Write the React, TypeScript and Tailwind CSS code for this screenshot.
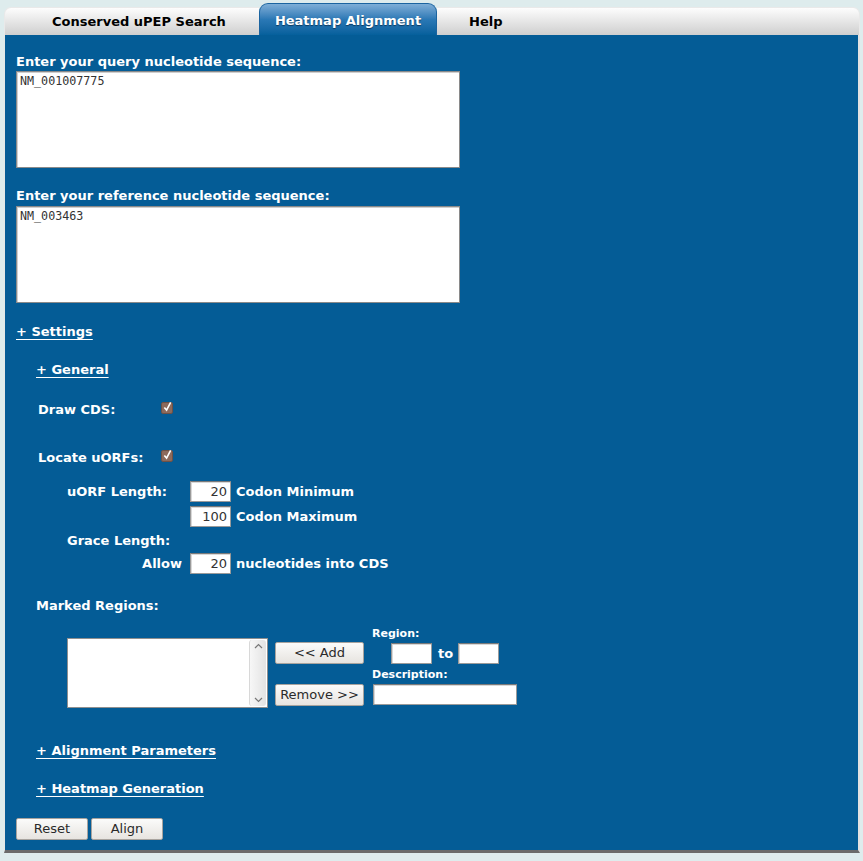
const font = "font-['DejaVu_Sans',Verdana,sans-serif]";

function Checkbox() {
  return (
    <span className="inline-flex h-[12px] w-[12px] items-center justify-center rounded-[2px] border border-[#6e5146] bg-[#8c6a5c]">
      <svg width="10" height="11" viewBox="0 0 10 11" className="-mt-[3px] ml-[1px]">
        <path d="M1.5 6.5 L4 9.5 L8.5 1" fill="none" stroke="#fff" strokeWidth="1.8" />
      </svg>
    </span>
  );
}

function NumInput({ value, w = "w-[41px]" }: { value?: string; w?: string }) {
  return (
    <div
      className={`${w} h-[21px] shrink-0 border border-[#9a9a9a] border-t-[#7a7a7a] bg-white px-[3px] text-right text-[13px] leading-[19px] text-[#333] shadow-[inset_1px_1px_0_#d8d8d8]`}
    >
      {value}
    </div>
  );
}

function Button({ children, w }: { children: React.ReactNode; w: string }) {
  return (
    <div
      className={`${w} h-[22px] shrink-0 rounded-[2px] border border-[#a8a39e] bg-gradient-to-b from-[#fbfbfa] to-[#e7e4e0] text-center text-[13px] leading-[20px] text-[#2a2a2a]`}
    >
      {children}
    </div>
  );
}

function Link({ children }: { children: React.ReactNode }) {
  return (
    <span className="font-bold text-white underline decoration-1 underline-offset-[3px]">{children}</span>
  );
}

export default function App() {
  return (
    <div className={`min-h-screen bg-[#deeced] pt-[3px] pl-[4px] ${font}`}>
      <div className="w-[856px]">
        {/* tabs */}
        <div className="flex h-[32px] items-end">
          <div className="h-[28px] w-[255px] rounded-tl-[7px] border-l border-t border-[#e9e9e9] bg-gradient-to-b from-[#fdfdfd] to-[#cfcfcf] pl-[47px] text-[13px] font-bold leading-[27px] text-black">
            Conserved uPEP Search
          </div>
          <div className="relative h-[32px] w-[178px] rounded-t-[9px] border border-b-0 border-[#1b64a0] bg-gradient-to-b from-[#7eaed7] via-[#2a78b5] to-[#05609c] text-center text-[13px] font-bold leading-[33px] text-white [text-shadow:0_1px_1px_#0b3a60]">
            Heatmap Alignment
          </div>
          <div className="h-[28px] flex-1 rounded-tr-[7px] border-r border-t border-[#e9e9e9] bg-gradient-to-b from-[#fdfdfd] to-[#cfcfcf] pl-[32px] text-[13px] font-bold leading-[27px] text-black">
            Help
          </div>
        </div>

        {/* panel */}
        <div className="border-b-[3px] border-l border-r-[2px] border-b-[#6b6b6b] border-l-[#e4e8e8] border-r-[#e2e2e2] bg-[#045c96] pl-[11px] pr-[10px] pt-[19px] pb-[10px] text-[13px] leading-[16px] text-white">
          <div className="font-bold">Enter your query nucleotide sequence:</div>
          <div className="mt-[1px] h-[97px] w-[444px] border border-[#8a8a8a] bg-white px-[3px] pt-[2px] font-['DejaVu_Sans_Mono',monospace] text-[11.7px] leading-[14px] text-[#333] shadow-[inset_1px_1px_0_#cfcfcf]">
            NM_001007775
          </div>

          <div className="mt-[20px] font-bold">Enter your reference nucleotide sequence:</div>
          <div className="mt-[2px] h-[97px] w-[444px] border border-[#8a8a8a] bg-white px-[3px] pt-[2px] font-['DejaVu_Sans_Mono',monospace] text-[11.7px] leading-[14px] text-[#333] shadow-[inset_1px_1px_0_#cfcfcf]">
            NM_003463
          </div>

          <div className="mt-[21px]">
            <Link>+ Settings</Link>
          </div>

          <div className="ml-[20px] mt-[22px]">
            <Link>+ General</Link>
          </div>

          <div className="ml-[22px] mt-[24px] flex items-start">
            <span className="w-[123px] font-bold">Draw CDS:</span>
            <Checkbox />
          </div>

          <div className="ml-[22px] mt-[32px] flex items-start">
            <span className="w-[123px] font-bold">Locate uORFs:</span>
            <Checkbox />
          </div>

          <div className="ml-[51px] mt-[15px] flex flex-col gap-[4px]">
            <div className="flex items-center">
              <span className="w-[123px] font-bold">uORF Length:</span>
              <NumInput value="20" />
              <span className="ml-[5px] font-bold">Codon Minimum</span>
            </div>
            <div className="flex items-center">
              <span className="w-[123px]" />
              <NumInput value="100" />
              <span className="ml-[5px] font-bold">Codon Maximum</span>
            </div>
            <div className="mt-[2px] font-bold">Grace Length:</div>
            <div className="flex items-center">
              <span className="w-[115px] text-right font-bold">Allow</span>
              <span className="w-[8px]" />
              <NumInput value="20" />
              <span className="ml-[5px] font-bold">nucleotides into CDS</span>
            </div>
          </div>

          <div className="ml-[20px] mt-[24px] font-bold">Marked Regions:</div>

          <div className="ml-[51px] mt-[13px] flex items-start">
            <div className="mt-[11px] flex h-[70px] w-[201px] border border-[#8f8f8f] bg-white">
              <div className="flex-1" />
              <div className="my-[1px] mr-[1px] flex w-[17px] flex-col items-center justify-between rounded-[3px] border-l border-[#d8d8d8] bg-gradient-to-r from-[#f7f7f7] to-[#e3e3e3] py-[3px]">
                <svg width="9" height="6" viewBox="0 0 9 6">
                  <path d="M1 5 L4.5 1.5 L8 5" fill="none" stroke="#777" strokeWidth="1.2" />
                </svg>
                <svg width="9" height="6" viewBox="0 0 9 6">
                  <path d="M1 1 L4.5 4.5 L8 1" fill="none" stroke="#777" strokeWidth="1.2" />
                </svg>
              </div>
            </div>
            <div className="ml-[7px] mt-[15px] flex flex-col gap-[20px]">
              <Button w="w-[89px]">&lt;&lt; Add</Button>
              <Button w="w-[89px]">Remove &gt;&gt;</Button>
            </div>
            <div className="ml-[8px] flex flex-col">
              <div className="text-[11px] font-bold leading-[13px]">Region:</div>
              <div className="ml-[19px] mt-[3px] flex items-center">
                <NumInput />
                <span className="ml-[6px] w-[20px] font-bold">to</span>
                <NumInput />
              </div>
              <div className="mt-[4px] text-[11px] font-bold leading-[13px]">Description:</div>
              <div className="ml-[1px] mt-[3px]">
                <NumInput w="w-[144px]" />
              </div>
            </div>
          </div>

          <div className="ml-[20px] mt-[35px]">
            <Link>+ Alignment Parameters</Link>
          </div>
          <div className="ml-[20px] mt-[22px]">
            <Link>+ Heatmap Generation</Link>
          </div>

          <div className="mt-[21px] flex gap-[3px]">
            <Button w="w-[72px]">Reset</Button>
            <Button w="w-[72px]">Align</Button>
          </div>
        </div>
      </div>
    </div>
  );
}
